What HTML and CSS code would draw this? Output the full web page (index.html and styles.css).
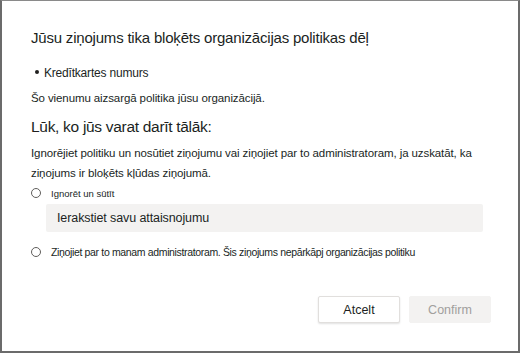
FILE: index.html
```html
<!DOCTYPE html>
<html>
<head>
<meta charset="utf-8">
<link rel="stylesheet" href="styles.css">
</head>
<body>
<div class="dialog">
  <h1 class="title">Jūsu ziņojums tika bloķēts organizācijas politikas dēļ</h1>
  <ul class="items"><li>Kredītkartes numurs</li></ul>
  <p class="note">Šo vienumu aizsargā politika jūsu organizācijā.</p>
  <h2 class="subtitle">Lūk, ko jūs varat darīt tālāk:</h2>
  <p class="desc">Ignorējiet politiku un nosūtiet ziņojumu vai ziņojiet par to administratoram, ja uzskatāt, ka ziņojums ir bloķēts kļūdas ziņojumā.</p>
  <label class="option"><span class="radio"></span><span class="opt-small">Ignorēt un sūtīt</span></label>
  <div class="input">Ierakstiet savu attaisnojumu</div>
  <label class="option second"><span class="radio"></span><span class="opt-text">Ziņojiet par to manam administratoram. Šis ziņojums nepārkāpj organizācijas politiku</span></label>
  <div class="actions">
    <button class="btn">Atcelt</button>
    <button class="btn primary" disabled>Confirm</button>
  </div>
</div>
</body>
</html>
```
FILE: styles.css
```css
html, body { margin: 0; padding: 0; }
body { font-family: "Liberation Sans", Arial, sans-serif; color: #201f1e; background: #fff; }
.dialog {
  box-sizing: border-box;
  width: 520px; height: 353px;
  border: 2px solid #6b6b6b;
  border-top: 1px solid #8a8a8a;
  padding: 27px 20px 0 29px;
  display: flex; flex-direction: column;
}
.title { margin: 0; font-size: 15px; letter-spacing: -0.2px; font-weight: normal; line-height: 20px; color: #201f1e; }
.items { margin: 17px 0 0 0; padding: 0 0 0 13px; font-size: 12px; line-height: 16px; letter-spacing: -0.2px; }
.items li { list-style: none; position: relative; }
.items li::before { content: ""; position: absolute; left: -9px; top: 5px; width: 4px; height: 4px; border-radius: 50%; background: #201f1e; }
.note { margin: 9px 0 0 0; font-size: 11.5px; line-height: 16px; letter-spacing: -0.1px; }
.subtitle { margin: 10px 0 0 0; font-size: 15.5px; letter-spacing: -0.3px; font-weight: normal; line-height: 22px; }
.desc { margin: 5px 0 0 0; font-size: 11.5px; line-height: 20px; letter-spacing: -0.1px; }
.option { display: flex; align-items: center; gap: 10px; margin-top: 2px; height: 16px; }
.radio { width: 10px; height: 10px; border: 1px solid #605e5c; border-radius: 50%; box-sizing: border-box; flex: none; }
.opt-small { font-size: 9.5px; }
.opt-text { font-size: 10.5px; letter-spacing: -0.35px; }
.input { margin: 3px 0 0 15px; width: 437px; height: 28px; box-sizing: border-box; background: #f3f2f1; border-radius: 2px; font-size: 12.5px; line-height: 28px; padding-left: 11px; color: #201f1e; letter-spacing: -0.1px; }
.second { margin-top: 12px; }
.actions { display: flex; justify-content: flex-end; gap: 9px; margin-top: 36px; padding-right: 7px; }
.btn { width: 82px; height: 27px; box-sizing: border-box; font-family: inherit; font-size: 12.5px; border: 1px solid #e1dfdd; background: #fff; color: #201f1e; border-radius: 2px; box-shadow: 0 1px 2px rgba(0,0,0,0.12); padding: 0; }
.btn.primary { background: #f3f2f1; border-color: #f3f2f1; color: #a19f9d; box-shadow: none; }
```
